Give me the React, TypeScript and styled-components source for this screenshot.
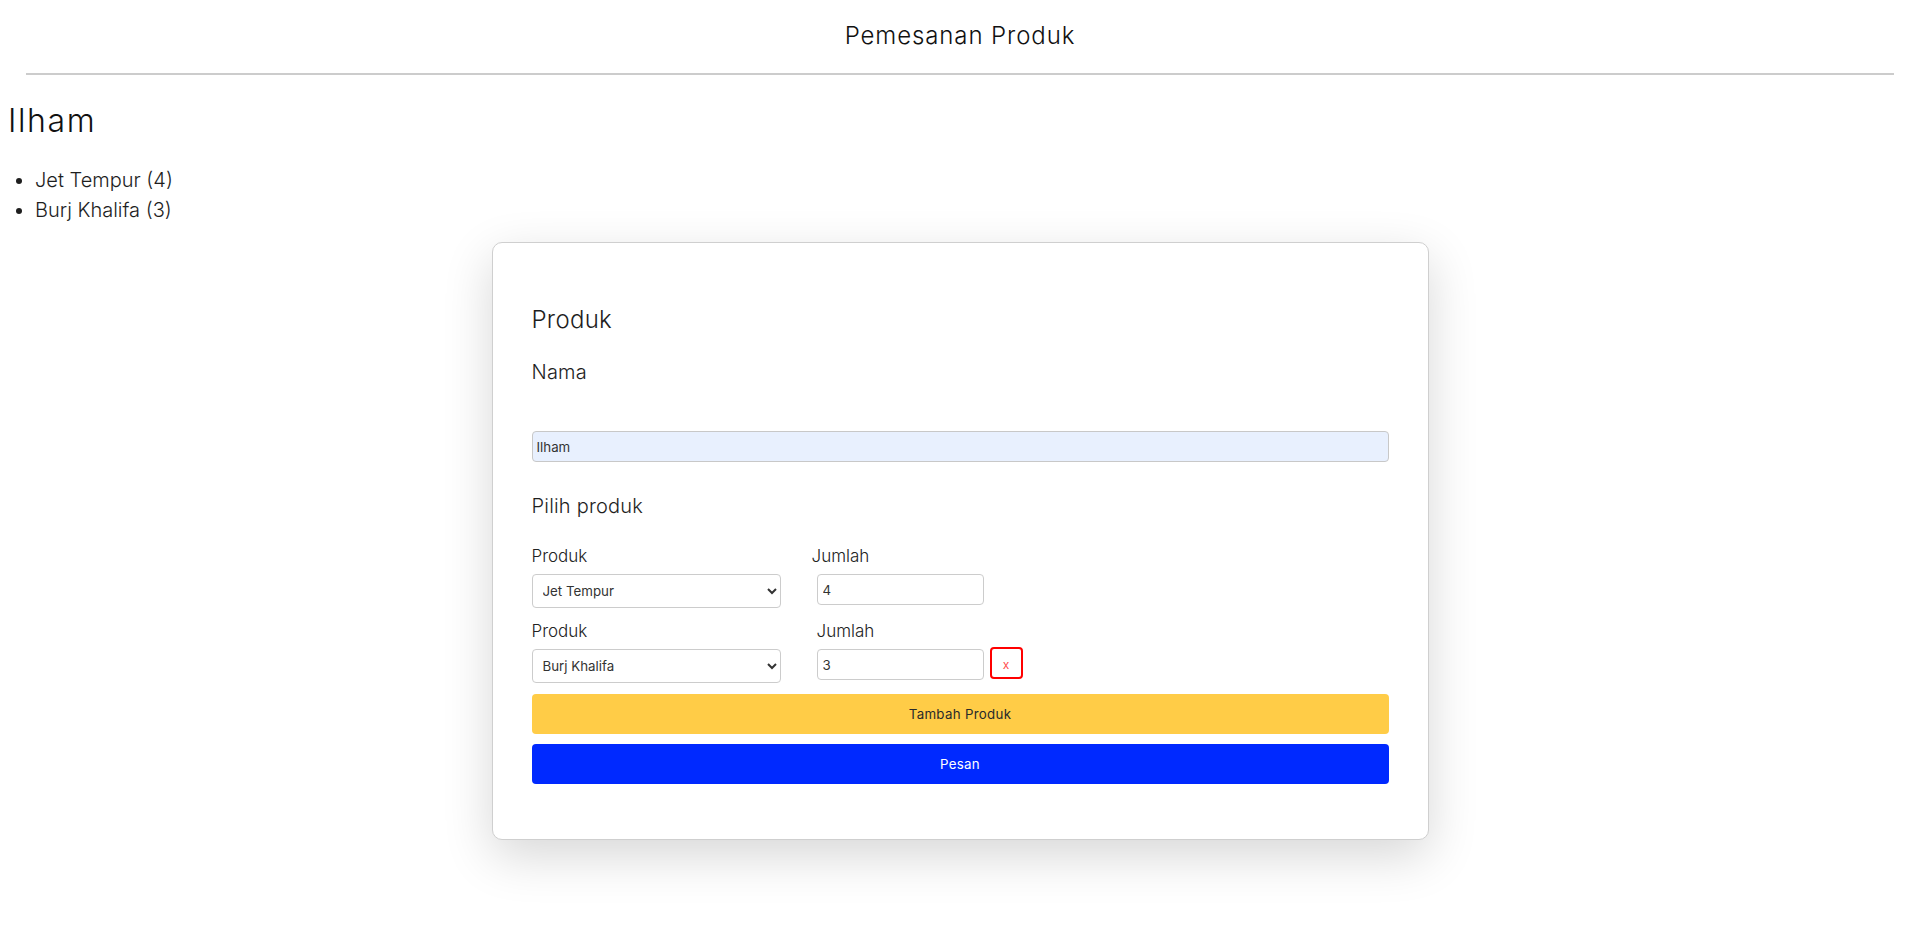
import React from "react";
import styled, { createGlobalStyle } from "styled-components";

const Global = createGlobalStyle`
  html, body {
    background: #fff;
  }
  body {
    margin: 8px;
    font-family: "Inter", "Noto Sans", "Liberation Sans", sans-serif;
    font-weight: 300;
    color: #1e1e1e;
  }
  * { box-sizing: border-box; }
`;

const Title = styled.div`
  text-align: center;
  font-size: 24px;
  line-height: 36px;
  margin-top: 10px;
  letter-spacing: 0.9px;
  color: #111;
`;

const Rule = styled.hr`
  margin: 19px 18px 0;
  border: none;
  border-top: 2px solid #cccccc;
  height: 0;
`;

const Customer = styled.h1`
  font-size: 32px;
  line-height: 48px;
  font-weight: 300;
  letter-spacing: 1.6px;
  margin: 22px 0 0;
  color: #111;
`;

const OrderList = styled.ul`
  margin: 20px 0 0;
  padding-left: 27px;
  font-size: 20px;
  line-height: 30px;
`;

const Card = styled.div`
  width: 937px;
  margin: 17px auto 90px;
  border: 1px solid #cfcfcf;
  border-radius: 10px;
  padding: 40px 39px 55px;
  background: #fff;
  box-shadow: 0 16px 50px rgba(0, 0, 0, 0.16);
`;

const CardTitle = styled.h2`
  font-size: 24px;
  line-height: 36px;
  font-weight: 300;
  letter-spacing: 0.3px;
  margin: 19px 0 0;
`;

const SectionLabel = styled.div<{ $gap: number }>`
  font-size: 20px;
  line-height: 30px;
  letter-spacing: 0.2px;
  margin-top: ${(p) => p.$gap}px;
`;

const NameInput = styled.input`
  display: block;
  width: 100%;
  height: 31px;
  margin-top: 44px;
  padding: 0 4px;
  border: 1px solid #c8c8c8;
  border-radius: 4px;
  background: #e8f0fe;
  font-family: inherit;
  font-weight: 400;
  font-size: 13.3px;
  color: #333;
  outline: none;
`;

const Rows = styled.div`
  margin-top: 23px;
  display: flex;
  flex-direction: column;
  gap: 11px;
`;

const Row = styled.div`
  display: flex;
  align-items: flex-end;
`;

const Field = styled.div<{ $width?: number; $offset?: number }>`
  display: flex;
  flex-direction: column;
  gap: 5px;
  ${(p) => (p.$width ? `width: ${p.$width}px;` : "")}
  ${(p) => (p.$offset ? `margin-left: ${p.$offset}px;` : "")}
`;

const FieldLabel = styled.label<{ $indent?: number }>`
  font-size: 17px;
  line-height: 25px;
  padding-left: ${(p) => p.$indent ?? 0}px;
  color: #222;
`;

const Select = styled.select`
  width: 100%;
  height: 34px;
  padding: 0 6px;
  border: 1px solid #cccccc;
  border-radius: 4px;
  background: #fff;
  font-family: inherit;
  font-weight: 400;
  font-size: 13.3px;
  color: #333;
`;

const QtyInput = styled.input`
  width: 167px;
  height: 31px;
  margin-left: 5px;
  margin-bottom: 3px;
  padding: 0 5px;
  border: 1px solid #cccccc;
  border-radius: 4px;
  font-family: inherit;
  font-weight: 400;
  font-size: 13.3px;
  color: #333;
`;

const RemoveButton = styled.button`
  width: 33px;
  height: 32px;
  margin-left: 6px;
  margin-bottom: 4px;
  border: 2px solid #ff0000;
  border-radius: 4px;
  background: #fff;
  color: #ff4d4d;
  font-family: inherit;
  font-size: 12px;
  padding: 4px 0 0;
  line-height: 1;
`;

const ActionButton = styled.button<{ $bg: string; $fg: string; $top: number }>`
  display: block;
  width: 100%;
  height: 40px;
  margin-top: ${(p) => p.$top}px;
  border: none;
  border-radius: 4px;
  background: ${(p) => p.$bg};
  color: ${(p) => p.$fg};
  font-family: inherit;
  font-weight: 400;
  font-size: 13.3px;
  letter-spacing: 0.3px;
`;

const items = [
  { name: "Jet Tempur", qty: 4 },
  { name: "Burj Khalifa", qty: 3 },
];

export default function App() {
  return (
    <>
      <Global />
      <Title>Pemesanan Produk</Title>
      <Rule />
      <Customer>Ilham</Customer>
      <OrderList>
        {items.map((it) => (
          <li key={it.name}>
            {it.name} ({it.qty})
          </li>
        ))}
      </OrderList>
      <Card>
        <CardTitle>Produk</CardTitle>
        <SectionLabel $gap={19}>Nama</SectionLabel>
        <NameInput defaultValue="Ilham" />
        <SectionLabel $gap={29}>Pilih produk</SectionLabel>
        <Rows>
          {items.map((it, i) => (
            <Row key={it.name}>
              <Field $width={249}>
                <FieldLabel>Produk</FieldLabel>
                <Select defaultValue={it.name}>
                  <option>Jet Tempur</option>
                  <option>Burj Khalifa</option>
                </Select>
              </Field>
              <Field $offset={31}>
                <FieldLabel $indent={i === 0 ? 0 : 5}>Jumlah</FieldLabel>
                <QtyInput type="number" defaultValue={it.qty} />
              </Field>
              {i > 0 && <RemoveButton>x</RemoveButton>}
            </Row>
          ))}
        </Rows>
        <ActionButton $bg="#ffcc47" $fg="#2a2a2a" $top={11}>
          Tambah Produk
        </ActionButton>
        <ActionButton $bg="#0029ff" $fg="#ffffff" $top={10}>
          Pesan
        </ActionButton>
      </Card>
    </>
  );
}
